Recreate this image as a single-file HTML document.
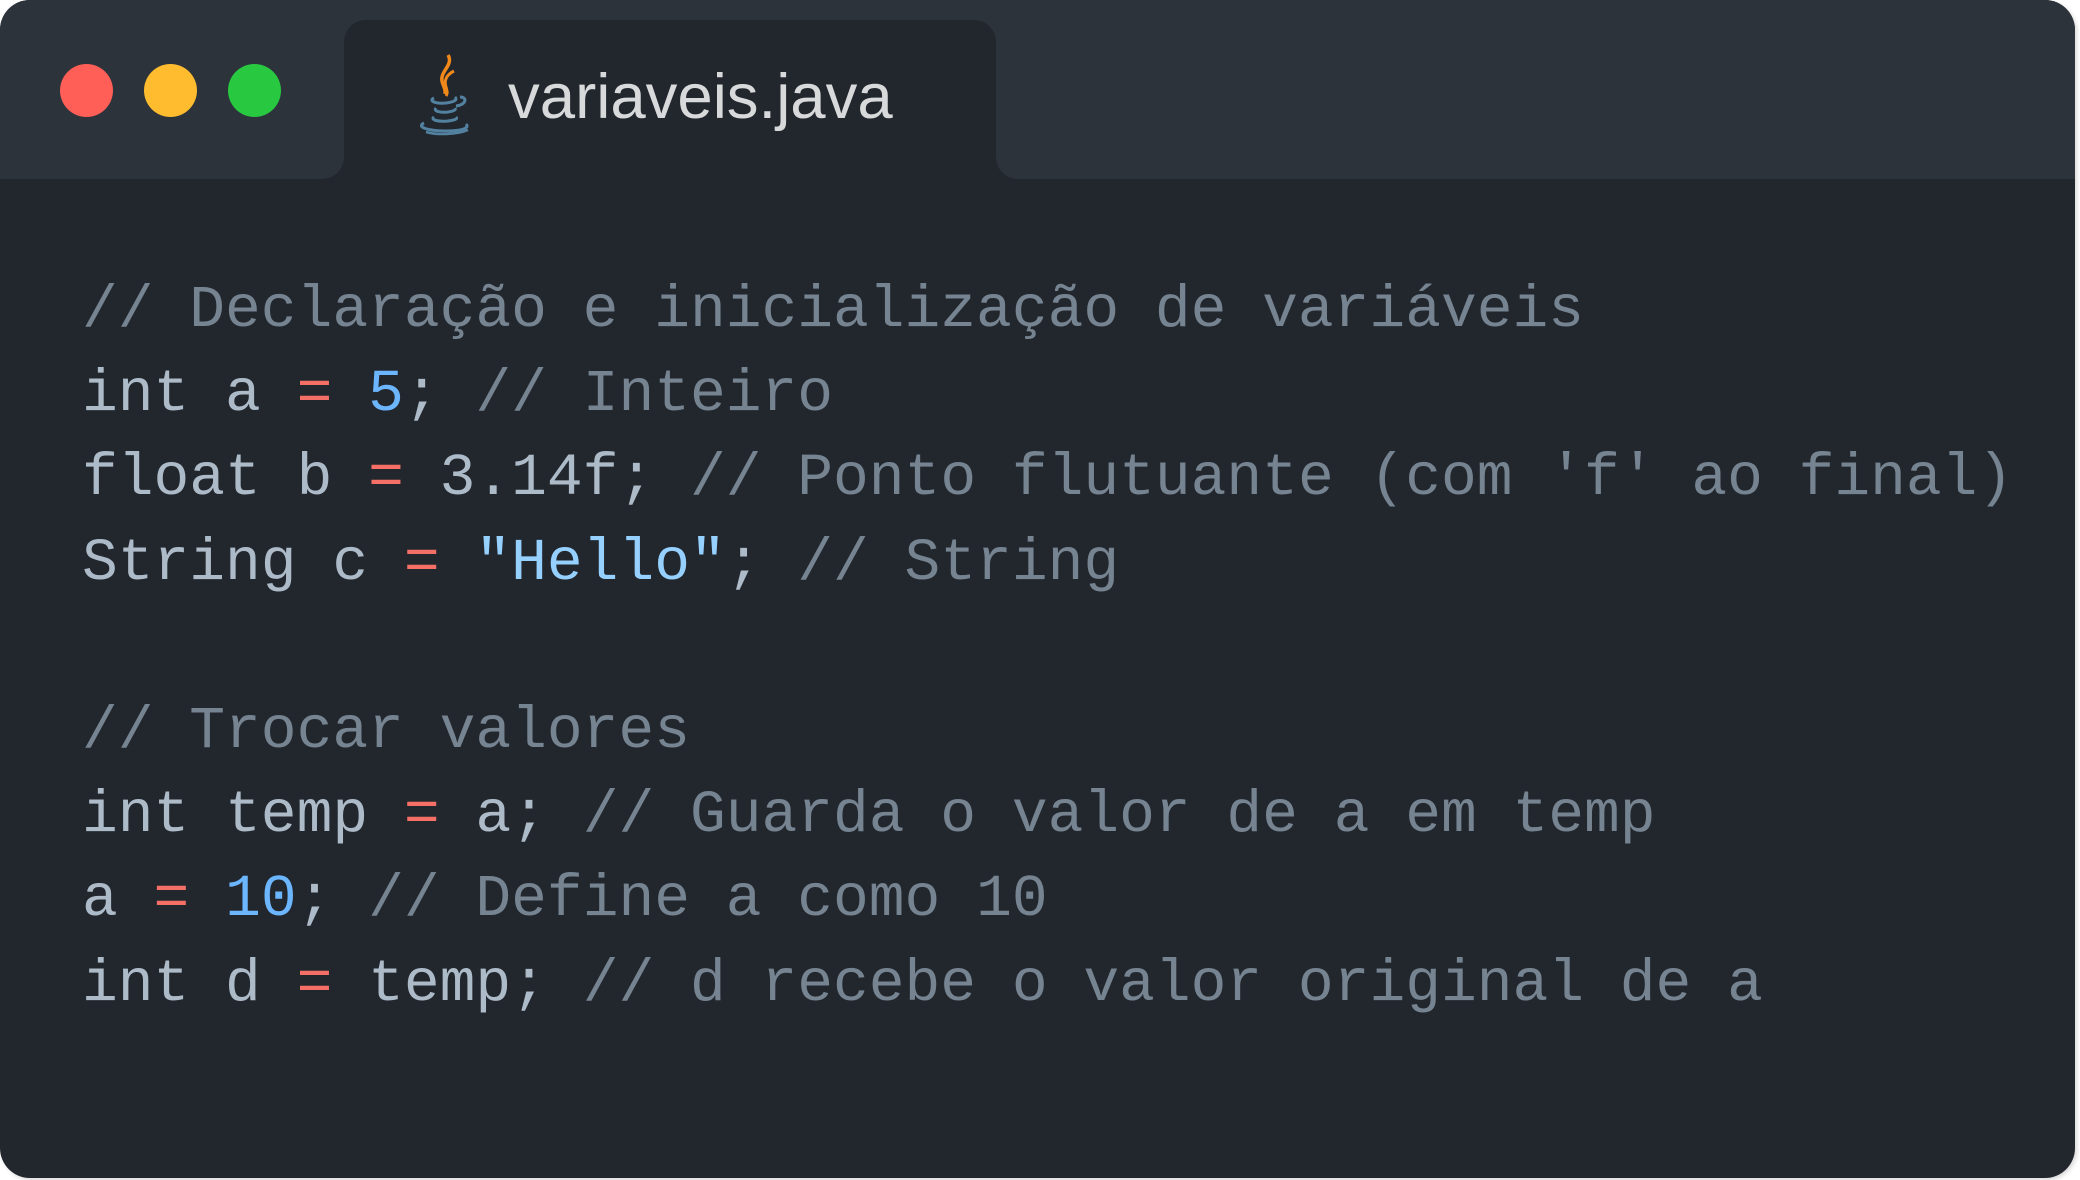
<!DOCTYPE html>
<html><head><meta charset="utf-8"><style>
html,body{margin:0;padding:0;background:#fff;width:2080px;height:1180px;overflow:hidden}
.win{position:absolute;left:0;top:0;width:2075px;height:1178px;background:#22272e;border-radius:30px;overflow:hidden;box-shadow:2px 2px 4px rgba(0,0,0,.15)}
.hl{position:absolute;left:0;top:0;width:344px;height:179px;background:#2d333b;border-bottom-right-radius:22px}
.hr{position:absolute;left:996px;top:0;right:0;height:179px;background:#2d333b;border-bottom-left-radius:22px}
.ht{position:absolute;left:300px;top:0;width:740px;height:60px;background:#2d333b}
.dot{position:absolute;top:64px;width:53px;height:53px;border-radius:50%}
.tab{position:absolute;left:344px;top:20px;width:652px;height:180px;background:#22272e;border-radius:22px 22px 0 0}
.tab .t{position:absolute;left:164px;top:42px;font:63.5px "Liberation Sans",sans-serif;color:#d8d9da;line-height:70px}
pre{position:absolute;left:82px;top:268px;margin:0;font:59.6px/84.2px "Liberation Mono",monospace;color:#adbac7}
.c{color:#768390}.o{color:#f47067}.n{color:#6cb6ff}.s{color:#96d0ff}
</style></head><body>
<div class="win">
<div class="hl"></div><div class="hr"></div><div class="ht"></div>
<div class="dot" style="left:60px;background:#ff5f57"></div>
<div class="dot" style="left:144px;background:#febc2e"></div>
<div class="dot" style="left:228px;background:#28c840"></div>
<div class="tab">
<svg style="position:absolute;left:66px;top:33px" width="66" height="85" viewBox="0 0 66 85">
<path d="M38 2c6 10-8 16-6 26 1 5 4 8 3 13" stroke="#f0881a" stroke-width="3.5" fill="none"/>
<path d="M44 18c-8 4-10 10-8 16 1 4 2 6 0 9" stroke="#f0881a" stroke-width="3" fill="none"/>
<path d="M24 45c-6 3 2 6 12 5 8-1 12-3 9-6M50 44c8 0 6 8-4 9" stroke="#5382a1" stroke-width="3" fill="none"/>
<path d="M26 55c-3 3 4 5 12 4 6-1 8-2 7-4M24 64c-4 3 5 5 14 4 7-1 10-2 8-4M14 70c-8 4 4 8 22 8 16 0 24-3 20-7" stroke="#5382a1" stroke-width="3" fill="none"/>
<path d="M16 79c10 3 30 3 42-2" stroke="#5382a1" stroke-width="2.5" fill="none"/>
</svg>
<div class="t">variaveis.java</div>
</div>
<pre><span class="c">// Declaração e inicialização de variáveis</span>
int a <span class="o">=</span> <span class="n">5</span>; <span class="c">// Inteiro</span>
float b <span class="o">=</span> 3.14f; <span class="c">// Ponto flutuante (com 'f' ao final)</span>
String c <span class="o">=</span> <span class="s">"Hello"</span>; <span class="c">// String</span>

<span class="c">// Trocar valores</span>
int temp <span class="o">=</span> a; <span class="c">// Guarda o valor de a em temp</span>
a <span class="o">=</span> <span class="n">10</span>; <span class="c">// Define a como 10</span>
int d <span class="o">=</span> temp; <span class="c">// d recebe o valor original de a</span></pre>
</div>
</body></html>
